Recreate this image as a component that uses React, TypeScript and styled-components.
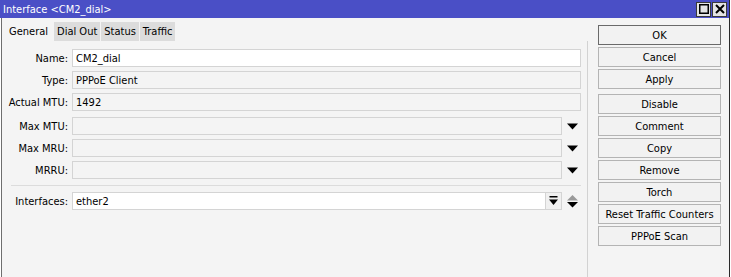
import styled, { createGlobalStyle } from "styled-components";

const GlobalStyle = createGlobalStyle`
  html, body {
    margin: 0;
    padding: 0;
    background: #ffffff;
  }
  body {
    font-family: "DejaVu Sans Condensed", "DejaVu Sans", sans-serif;
    font-stretch: condensed;
    font-size: 11px;
    color: #000;
  }
`;

const leftFields = [
  { label: "Name", value: "CM2_dial", editable: true },
  { label: "Type", value: "PPPoE Client" },
  { label: "Actual MTU", value: "1492" },
];

const dropFields = ["Max MTU", "Max MRU", "MRRU"];

const buttonGroups = [
  ["OK", "Cancel", "Apply"],
  ["Disable", "Comment", "Copy", "Remove", "Torch", "Reset Traffic Counters", "PPPoE Scan"],
];

const tabs = ["General", "Dial Out", "Status", "Traffic"];

const DownArrow = () => (
  <svg width="11" height="7" viewBox="0 0 11 7">
    <path d="M0 0.5 H11 L5.5 6.5 Z" fill="#000" />
  </svg>
);

const ComboArrow = () => (
  <svg width="9" height="10" viewBox="0 0 9 10">
    <rect x="0.5" y="0" width="8" height="1.5" fill="#000" />
    <path d="M0 3.5 H9 L4.5 9 Z" fill="#000" />
  </svg>
);

const UpDownArrow = () => (
  <svg width="11" height="13" viewBox="0 0 11 13">
    <path d="M5.5 0 L11 5.5 H0 Z" fill="#9a9a9a" />
    <path d="M0 7 H11 L5.5 12.5 Z" fill="#000" />
  </svg>
);

export default function App() {
  return (
    <Window>
      <GlobalStyle />
      <TitleBar>
        <Title>Interface &lt;CM2_dial&gt;</Title>
        <TitleButtons>
          <TitleButton>
            <svg width="10" height="10" viewBox="0 0 10 10">
              <rect x="0.75" y="0.75" width="8.5" height="8.5" fill="none" stroke="#000" strokeWidth="1.5" />
            </svg>
          </TitleButton>
          <TitleButton>
            <svg width="10" height="10" viewBox="0 0 10 10">
              <path d="M1 1 L9 9 M9 1 L1 9" stroke="#000" strokeWidth="2" />
            </svg>
          </TitleButton>
        </TitleButtons>
      </TitleBar>
      <Body>
        <Left>
          <Tabs>
            {tabs.map((t, i) => (
              <Tab key={t} $active={i === 0}>
                {t}
              </Tab>
            ))}
          </Tabs>
          <Panel>
            <Rows>
              {leftFields.map((f) => (
                <Row key={f.label}>
                  <Label>{f.label}:</Label>
                  <Field $white={f.editable}>{f.value}</Field>
                </Row>
              ))}
            </Rows>
            <Rows>
              {dropFields.map((l) => (
                <Row key={l}>
                  <Label>{l}:</Label>
                  <Field />
                  <IconSlot>
                    <DownArrow />
                  </IconSlot>
                </Row>
              ))}
            </Rows>
            <Separator />
            <Row>
              <Label>Interfaces:</Label>
              <Field $white>ether2</Field>
              <ComboButton>
                <ComboArrow />
              </ComboButton>
              <IconSlot>
                <UpDownArrow />
              </IconSlot>
            </Row>
          </Panel>
        </Left>
        <Buttons>
          {buttonGroups.map((g, gi) => (
            <ButtonGroup key={gi}>
              {g.map((b) => (
                <Button key={b} $default={b === "OK"}>
                  {b}
                </Button>
              ))}
            </ButtonGroup>
          ))}
        </Buttons>
      </Body>
    </Window>
  );
}

const Window = styled.div`
  width: 729px;
  height: 277px;
  display: flex;
  flex-direction: column;
  border-right: 1px solid #2a2a2a;
  overflow: hidden;
`;

const TitleBar = styled.div`
  height: 18px;
  flex: none;
  background: #4a4fc6;
  display: flex;
  align-items: center;
  justify-content: space-between;
  padding: 0 2px 0 3px;
`;

const Title = styled.span`
  color: #ffffff;
  font-size: 11px;
`;

const TitleButtons = styled.div`
  display: flex;
  gap: 1px;
`;

const TitleButton = styled.div`
  width: 13px;
  height: 13px;
  background: #e4e4e4;
  border: 1px solid #3a3a3a;
  display: flex;
  align-items: center;
  justify-content: center;
`;

const Body = styled.div`
  flex: 1;
  display: flex;
  background: #f4f4f4;
  border-left: 1px solid #6e6e6e;
  margin-left: 1px;
`;

const Left = styled.div`
  width: 586px;
  display: flex;
  flex-direction: column;
  padding-top: 4px;
`;

const Tabs = styled.div`
  display: flex;
  padding-left: 2px;
  height: 19px;
`;

const Tab = styled.div<{ $active?: boolean }>`
  padding: 0 ${(p) => (p.$active ? "5px" : "3px")};
  margin-right: 1px;
  display: flex;
  align-items: center;
  background: ${(p) => (p.$active ? "#f4f4f4" : "#dcdcdc")};
`;

const Panel = styled.div`
  flex: 1;
  border-right: 1px solid #d2d2d2;
  padding: 8px 6px 0 0;
`;

const Rows = styled.div`
  display: flex;
  flex-direction: column;
  gap: 4px;
  & + & {
    margin-top: 6px;
  }
`;

const Row = styled.div`
  display: flex;
  align-items: center;
  height: 18px;
`;

const Label = styled.div`
  width: 66px;
  padding-right: 4px;
  text-align: right;
  white-space: nowrap;
`;

const Field = styled.div<{ $white?: boolean }>`
  flex: 1;
  height: 18px;
  box-sizing: border-box;
  background: ${(p) => (p.$white ? "#ffffff" : "#f4f4f4")};
  border: 1px solid #d4d4d4;
  padding: 0 3px;
  display: flex;
  align-items: center;
`;

const IconSlot = styled.div`
  width: 17px;
  display: flex;
  justify-content: center;
  align-items: center;
  padding-left: 2px;
`;

const ComboButton = styled.div`
  width: 16px;
  height: 18px;
  box-sizing: border-box;
  border: 1px solid #d4d4d4;
  border-left: none;
  background: #f0f0f0;
  display: flex;
  align-items: center;
  justify-content: center;
`;

const Separator = styled.div`
  height: 1px;
  background: #dcdcdc;
  margin: 6px 0 6px 9px;
`;

const Buttons = styled.div`
  display: flex;
  flex-direction: column;
  gap: 5px;
  padding: 7px 0 0 10px;
`;

const ButtonGroup = styled.div`
  display: flex;
  flex-direction: column;
  gap: 2px;
`;

const Button = styled.div<{ $default?: boolean }>`
  width: 123px;
  height: 20px;
  box-sizing: border-box;
  border: 1px solid ${(p) => (p.$default ? "#6a6a6a" : "#b4b4b4")};
  background: #f2f2f2;
  display: flex;
  align-items: center;
  justify-content: center;
  white-space: nowrap;
`;
